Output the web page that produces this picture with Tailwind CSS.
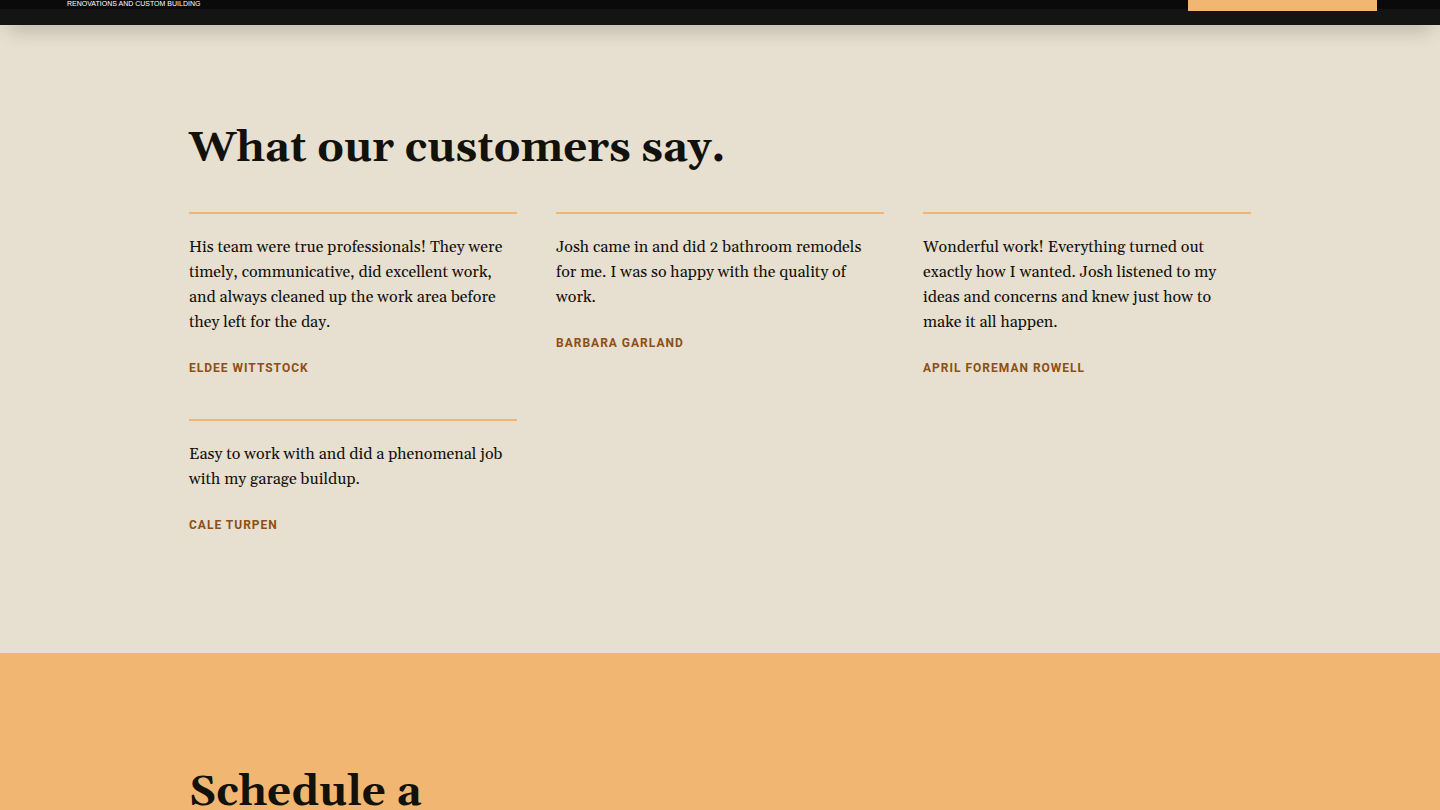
<!DOCTYPE html>
<html lang="en">
<head>
    <meta charset="UTF-8">
    <meta name="viewport" content="width=device-width, initial-scale=1.0">
    <title>Renovations and Custom Building</title>
    <script src="https://cdn.jsdelivr.net/npm/@tailwindcss/browser@4"></script>
</head>
<body class="bg-[#e7dfcf] text-[#12110c] font-[Gelasio,'Liberation_Serif',serif] overflow-x-hidden">
    <!-- Header -->
    <header class="relative flex justify-between items-start pl-[67px] pr-[63px] pb-[14px] bg-[linear-gradient(#0a0a0a_9px,#141414_9px)] shadow-[0_10px_20px_-8px_rgba(0,0,0,0.35)]">
        <p class="text-[7px] leading-[8px] text-white font-['Liberation_Sans',sans-serif]">RENOVATIONS AND CUSTOM BUILDING</p>
        <a href="#schedule" aria-label="Schedule" class="block w-[189px] h-[11px] bg-[#f1b671]"></a>
    </header>

    <main>
        <!-- Testimonials -->
        <section class="px-6 pt-24 pb-[118px]">
            <div class="max-w-[1062px] mx-auto">
                <h2 class="text-[42px] leading-[56px] font-bold mb-[35px]">What our customers say.</h2>
                <div class="grid grid-cols-3 gap-x-[39px] gap-y-[41px] items-start">
                    <blockquote class="border-t-2 border-[#f1b671] pt-[21px]">
                        <p class="text-[16px] leading-[25px]">His team were true professionals! They were<br>timely, communicative, did excellent work,<br>and always cleaned up the work area before<br>they left for the day.</p>
                        <cite class="block mt-[23px] text-[12px] leading-[20px] font-bold not-italic uppercase tracking-[1px] text-[#8d4f14] font-[Roboto,sans-serif]">Eldee Wittstock</cite>
                    </blockquote>
                    <blockquote class="border-t-2 border-[#f1b671] pt-[21px]">
                        <p class="text-[16px] leading-[25px]">Josh came in and did 2 bathroom remodels<br>for me. I was so happy with the quality of<br>work.</p>
                        <cite class="block mt-[23px] text-[12px] leading-[20px] font-bold not-italic uppercase tracking-[1px] text-[#8d4f14] font-[Roboto,sans-serif]">Barbara Garland</cite>
                    </blockquote>
                    <blockquote class="border-t-2 border-[#f1b671] pt-[21px]">
                        <p class="text-[16px] leading-[25px]">Wonderful work! Everything turned out<br>exactly how I wanted. Josh listened to my<br>ideas and concerns and knew just how to<br>make it all happen.</p>
                        <cite class="block mt-[23px] text-[12px] leading-[20px] font-bold not-italic uppercase tracking-[1px] text-[#8d4f14] font-[Roboto,sans-serif]">April Foreman Rowell</cite>
                    </blockquote>
                    <blockquote class="border-t-2 border-[#f1b671] pt-[21px]">
                        <p class="text-[16px] leading-[25px]">Easy to work with and did a phenomenal job<br>with my garage buildup.</p>
                        <cite class="block mt-[23px] text-[12px] leading-[20px] font-bold not-italic uppercase tracking-[1px] text-[#8d4f14] font-[Roboto,sans-serif]">Cale Turpen</cite>
                    </blockquote>
                </div>
            </div>
        </section>

        <!-- Schedule -->
        <section id="schedule" class="bg-[#f1b671] px-6 pt-28">
            <div class="max-w-[1062px] mx-auto">
                <h2 class="text-[42px] leading-[56px] font-bold">Schedule a</h2>
            </div>
        </section>
    </main>
</body>
</html>
